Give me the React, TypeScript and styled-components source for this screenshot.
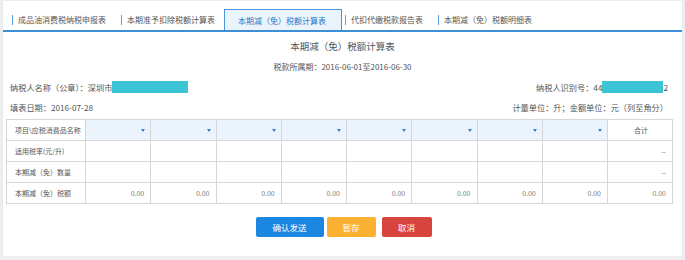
import React from "react";
import styled, { createGlobalStyle } from "styled-components";

const GlobalStyle = createGlobalStyle`
  html, body {
    margin: 0;
    padding: 0;
    background: #eeeeee;
  }
  body {
    font-family: "Noto Sans CJK SC", "Noto Sans", sans-serif;
    color: #555555;
  }
`;

const Panel = styled.div`
  margin: 1px 2px 0 2px;
  height: 255px;
  background: #ffffff;
  border-left: 1px solid #ebebeb;
  border-right: 1px solid #ebebeb;
  box-sizing: border-box;
  overflow: hidden;
`;

const TabBar = styled.div`
  display: flex;
  align-items: flex-end;
  height: 31px;
  padding-left: 3px;
  border-bottom: 2px solid #3f8fd8;
  box-sizing: border-box;
`;

const Tab = styled.div<{ $active?: boolean }>`
  height: 21px;
  display: flex;
  align-items: center;
  box-sizing: border-box;
  font-size: 8px;
  white-space: nowrap;
  color: ${({ $active }) => ($active ? "#2a78c6" : "#555555")};
  background: ${({ $active }) => ($active ? "#eaf4fd" : "transparent")};
  border: ${({ $active }) => ($active ? "1px solid #4a95dc" : "none")};
  border-bottom: none;
  padding: ${({ $active }) => ($active ? "0 15px 0 13px" : "0 9px 0 6px")};
  margin-right: ${({ $active }) => ($active ? "-3px" : "0")};

  &::before {
    content: "";
    display: ${({ $active }) => ($active ? "none" : "block")};
    width: 1px;
    height: 10px;
    background: #5aa0e0;
    margin-right: 5px;
  }
`;

const Title = styled.div`
  margin-top: 4px;
  text-align: center;
  font-size: 9.5px;
  line-height: 20px;
  color: #555555;
`;

const Period = styled.div`
  margin-top: 1px;
  text-align: center;
  font-size: 8px;
  line-height: 20px;
`;

const InfoRow = styled.div`
  display: flex;
  justify-content: space-between;
  align-items: center;
  height: 20px;
  padding: 0 14px 0 7px;
  font-size: 8.2px;
`;

const InfoItem = styled.div`
  display: flex;
  align-items: center;
  white-space: nowrap;
`;

const Masked = styled.span<{ $w: number }>`
  display: inline-block;
  width: ${({ $w }) => $w}px;
  height: 12px;
  background: #3dc5d5;
`;

const Table = styled.table`
  margin: 2px 0 0 3px;
  width: 667px;
  border-collapse: collapse;
  table-layout: fixed;
  font-size: 7px;
`;

const Row = styled.tr`
  height: 21px;
`;

const Cell = styled.td<{ $align?: "left" | "right" | "center"; $head?: boolean }>`
  border: 1px solid #d6d6d6;
  padding: 0 6px 0 8px;
  text-align: ${({ $align }) => $align || "left"};
  background: ${({ $head }) => ($head ? "#ebf4fd" : "#ffffff")};
  color: ${({ $align }) => ($align === "right" ? "#777777" : "#555555")};
  white-space: nowrap;
  position: relative;
`;

const Caret = styled.span`
  position: absolute;
  right: 5px;
  top: 9px;
  width: 0;
  height: 0;
  border-left: 2px solid transparent;
  border-right: 2px solid transparent;
  border-top: 3px solid #3b7fcf;
`;

const Actions = styled.div`
  display: flex;
  justify-content: center;
  margin-top: 13px;
  padding-left: 2px;
`;

const Button = styled.button<{ $color: string; $w: number; $gap: number }>`
  width: ${({ $w }) => $w}px;
  height: 20px;
  margin-right: ${({ $gap }) => $gap}px;
  padding: 0;
  border: none;
  border-radius: 2px;
  background: ${({ $color }) => $color};
  color: #ffffff;
  font-family: "Noto Sans CJK SC", sans-serif;
  font-size: 8.5px;
  cursor: pointer;
`;

const tabs = [
  "成品油消费税纳税申报表",
  "本期准予扣除税额计算表",
  "本期减（免）税额计算表",
  "代扣代缴税款报告表",
  "本期减（免）税额明细表",
];

const dataCols = 8;

export default function App() {
  const cols = Array.from({ length: dataCols });
  return (
    <>
      <GlobalStyle />
      <Panel>
        <TabBar>
          {tabs.map((t, i) => (
            <Tab key={t} $active={i === 2}>
              {t}
            </Tab>
          ))}
        </TabBar>
        <Title>本期减（免）税额计算表</Title>
        <Period>税款所属期：2016-06-01至2016-06-30</Period>
        <InfoRow>
          <InfoItem>
            纳税人名称（公章）：深圳市
            <Masked $w={76} />
          </InfoItem>
          <InfoItem>
            纳税人识别号：44
            <Masked $w={61} />2
          </InfoItem>
        </InfoRow>
        <InfoRow>
          <InfoItem>填表日期：2016-07-28</InfoItem>
          <InfoItem>计量单位：升；金额单位：元（列至角分）</InfoItem>
        </InfoRow>
        <Table>
          <colgroup>
            <col style={{ width: 79 }} />
            {cols.map((_, i) => (
              <col key={i} />
            ))}
            <col style={{ width: 65 }} />
          </colgroup>
          <tbody>
            <Row>
              <Cell>项目\应税消费品名称</Cell>
              {cols.map((_, i) => (
                <Cell key={i} $head>
                  <Caret />
                </Cell>
              ))}
              <Cell $align="center">合计</Cell>
            </Row>
            <Row>
              <Cell>适用税率(元/升)</Cell>
              {cols.map((_, i) => (
                <Cell key={i} />
              ))}
              <Cell $align="right">--</Cell>
            </Row>
            <Row>
              <Cell>本期减（免）数量</Cell>
              {cols.map((_, i) => (
                <Cell key={i} />
              ))}
              <Cell $align="right">--</Cell>
            </Row>
            <Row>
              <Cell>本期减（免）税额</Cell>
              {cols.map((_, i) => (
                <Cell key={i} $align="right">
                  0.00
                </Cell>
              ))}
              <Cell $align="right">0.00</Cell>
            </Row>
          </tbody>
        </Table>
        <Actions>
          <Button $color="#1b87e0" $w={68} $gap={3}>
            确认发送
          </Button>
          <Button $color="#fcb132" $w={49} $gap={6}>
            暂存
          </Button>
          <Button $color="#d7443d" $w={50} $gap={0}>
            取消
          </Button>
        </Actions>
      </Panel>
    </>
  );
}
